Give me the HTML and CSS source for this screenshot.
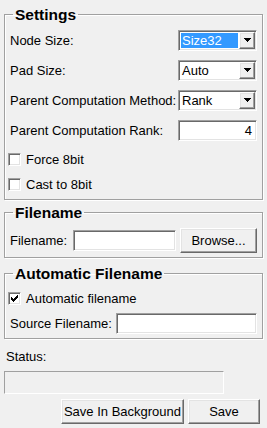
FILE: index.html
```html
<!DOCTYPE html>
<html>
<head>
<meta charset="utf-8">
<link rel="stylesheet" href="styles.css">
</head>
<body>
<div class="app">
  <fieldset class="group g-settings">
    <legend>Settings</legend>
    <div class="row">
      <span>Node Size:</span>
      <div class="combo"><span class="combo-val selected">Size32</span><span class="arrow-btn"><svg width="7" height="4" viewBox="0 0 7 4"><path d="M0 0h7v1h-1v1h-1v1h-1v1h-1v-1h-1v-1h-1v-1h-1z"/></svg></span></div>
    </div>
    <div class="row">
      <span>Pad Size:</span>
      <div class="combo"><span class="combo-val">Auto</span><span class="arrow-btn"><svg width="7" height="4" viewBox="0 0 7 4"><path d="M0 0h7v1h-1v1h-1v1h-1v1h-1v-1h-1v-1h-1v-1h-1z"/></svg></span></div>
    </div>
    <div class="row">
      <span>Parent Computation Method:</span>
      <div class="combo"><span class="combo-val">Rank</span><span class="arrow-btn"><svg width="7" height="4" viewBox="0 0 7 4"><path d="M0 0h7v1h-1v1h-1v1h-1v1h-1v-1h-1v-1h-1v-1h-1z"/></svg></span></div>
    </div>
    <div class="row">
      <span>Parent Computation Rank:</span>
      <div class="field num-field">4</div>
    </div>
    <div class="check-row first"><span class="cbox"></span><span>Force 8bit</span></div>
    <div class="check-row"><span class="cbox"></span><span>Cast to 8bit</span></div>
  </fieldset>

  <fieldset class="group g-file">
    <legend>Filename</legend>
    <div class="file-row">
      <span class="nolap">Filename:</span>
      <div class="field file-field"></div>
      <div class="btn browse-btn">Browse...</div>
    </div>
  </fieldset>

  <fieldset class="group g-auto">
    <legend>Automatic Filename</legend>
    <div class="check-row auto-check"><span class="cbox"><svg width="7" height="7" viewBox="0 0 7 7"><path d="M0 2h1v1h1v1h1v-1h1v-1h1v-1h1v-1h1v3h-1v1h-1v1h-1v1h-1v1h-1v-1h-1v-1h-1v-1h-1z"/></svg></span><span>Automatic filename</span></div>
    <div class="src-row">
      <span class="nolap">Source Filename:</span>
      <div class="field src-field"></div>
    </div>
  </fieldset>

  <div class="status-label">Status:</div>
  <div class="status-box"></div>
  <div class="actions">
    <div class="btn bg-btn">Save In Background</div>
    <div class="btn save-btn">Save</div>
  </div>
</div>
</body>
</html>
```

FILE: styles.css
```css
* { box-sizing: border-box; }
html, body { margin: 0; padding: 0; }
body {
  background: #f0f0f0;
  font-family: "Liberation Sans", Arial, sans-serif;
  font-size: 13px;
  line-height: 15px;
  color: #000;
  width: 267px;
  height: 428px;
  overflow: hidden;
  white-space: nowrap;
}
.app { padding: 5px 4px 0 4px; }

.group {
  margin: 0;
  min-width: 0;
  border: 1px solid #a0a0a0;
  box-shadow: inset 1px 1px #fff, 1px 1px #fff;
  padding: 5px 5px 5px 5px;
}
.group legend {
  font-weight: bold;
  font-size: 15.5px;
  line-height: 19px;
  padding: 0 2px;
  margin-left: 3px;
}

.row {
  display: flex;
  align-items: center;
  justify-content: space-between;
  height: 22px;
  margin-bottom: 8px;
}

.combo {
  width: 79px;
  height: 21px;
  display: flex;
  background: #fff;
  border: 1px solid;
  border-color: #a0a0a0 #fff #fff #a0a0a0;
  box-shadow: inset 1px 1px #696969, inset -1px -1px #e3e3e3;
  padding: 2px 2px 2px 2px;
}
.combo-val {
  flex: 1;
  padding-left: 1px;
  line-height: 15px;
}
.combo-val.selected { background: #3399ff; color: #fff; }
.arrow-btn {
  width: 16px;
  height: 17px;
  margin: -1px -1px -1px 1px;
  display: flex;
  align-items: center;
  justify-content: center;
  background: #f0f0f0;
  border: 1px solid;
  border-color: #fff #696969 #696969 #fff;
  box-shadow: inset -1px -1px #a0a0a0, inset 1px 1px #e3e3e3;
}
.arrow-btn svg { display: block; }

.field {
  height: 21px;
  background: #fff;
  border: 1px solid;
  border-color: #a0a0a0 #fff #fff #a0a0a0;
  box-shadow: inset 1px 1px #696969, inset -1px -1px #e3e3e3;
  padding: 2px 4px;
}
.num-field { width: 79px; text-align: right; }
.nolap { flex-shrink: 0; }

.check-row {
  display: flex;
  align-items: center;
  height: 20px;
  margin-left: -2px;
  gap: 5px;
}
.check-row.first { margin-top: 7px; }
.check-row + .check-row { margin-top: 5px; }
.cbox {
  width: 13px;
  height: 13px;
  flex-shrink: 0;
  background: #fff;
  border: 1px solid;
  border-color: #a0a0a0 #fff #fff #a0a0a0;
  box-shadow: inset 1px 1px #696969, inset -1px -1px #e3e3e3;
  display: flex;
  align-items: center;
  justify-content: center;
}
.cbox svg { display: block; }

.btn {
  display: flex;
  align-items: center;
  justify-content: center;
  background: #f0f0f0;
  border: 1px solid;
  border-color: #fff #696969 #696969 #fff;
  box-shadow: inset -1px -1px #a0a0a0, inset 1px 1px #e3e3e3;
}

.g-file { margin-top: 3px; padding-bottom: 4px; }
.file-row {
  display: flex;
  align-items: center;
  height: 25px;
  margin-top: 1px;
}
.file-field { width: 106px; margin-left: 6px; }
.browse-btn { width: 77px; height: 25px; margin-left: 4px; flex-shrink: 0; }

.g-auto { margin-top: 6px; padding-bottom: 4px; }
.auto-check { margin-top: 0; }
.src-row {
  display: flex;
  align-items: center;
  height: 22px;
  margin-top: 4px;
}
.src-field { flex: 1; min-width: 0; margin-left: 4px; }

.status-label { margin: 10px 0 0 2px; }
.status-box {
  width: 220px;
  height: 23px;
  margin-top: 7px;
  border: 1px solid;
  border-color: #a0a0a0 #fff #fff #a0a0a0;
}
.actions {
  display: flex;
  justify-content: flex-end;
  gap: 4px;
  margin-top: 5px;
  padding-right: 3px;
}
.bg-btn { width: 123px; height: 25px; }
.save-btn { width: 72px; height: 25px; }
```
